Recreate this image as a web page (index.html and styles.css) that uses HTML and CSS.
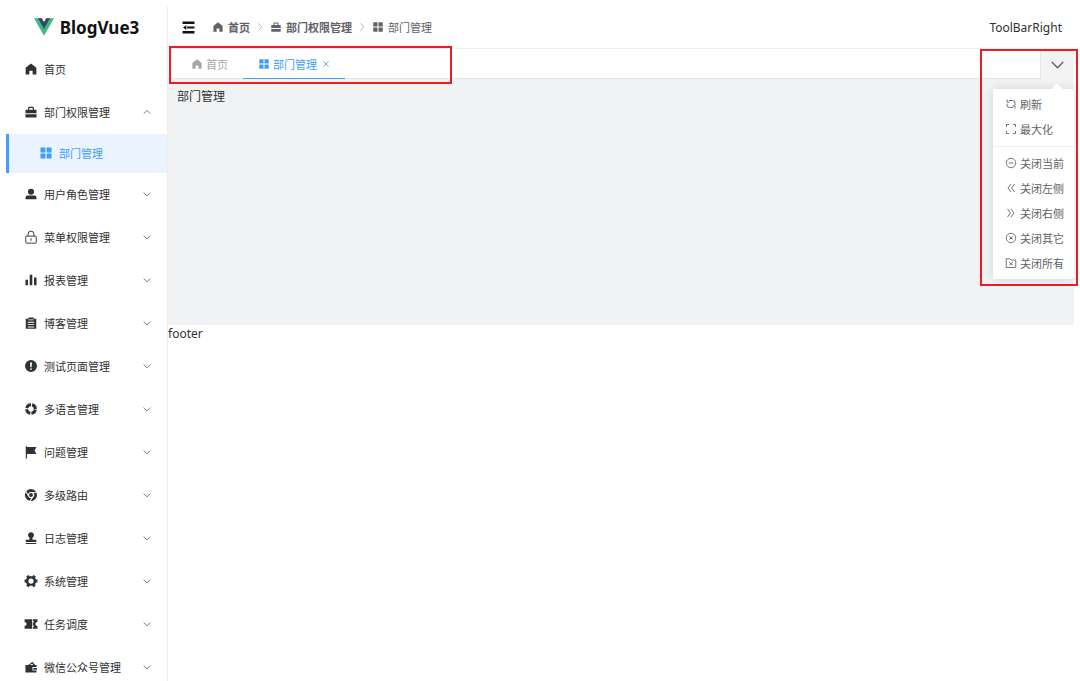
FILE: index.html
```
<!DOCTYPE html>
<html lang="zh-CN">
<head>
    <meta charset="UTF-8">
    <meta name="viewport" content="width=device-width, initial-scale=1.0">
    <title>BlogVue3</title>
    <link rel="stylesheet" href="styles.css">
</head>
<body>

    <!-- Icon set -->
    <svg class="sprite" aria-hidden="true">
        <symbol id="i-home" viewBox="0 0 24 24"><path d="M12 2.500 2.800 10V21.500h6.400V15h5.600v6.500h6.400V10z" fill="currentColor"/></symbol>
        <symbol id="i-suitcase" viewBox="0 0 24 24"><path d="M2.500 14V9q0-1 1-1H7V4.500q0-1.500 1.500-1.500h7q1.500 0 1.500 1.500V8h3.500q1 0 1 1v5zM9 8h6V5H9zM2.500 16h19v4.500q0 1-1 1h-17q-1 0-1-1z" fill="currentColor" fill-rule="evenodd"/></symbol>
        <symbol id="i-menu" viewBox="0 0 24 24"><g fill="currentColor"><rect x="2.500" y="2.500" width="8.500" height="8.500" rx=".7"/><rect x="13" y="2.500" width="8.500" height="8.500" rx=".7"/><rect x="2.500" y="13" width="8.500" height="8.500" rx=".7"/><rect x="13" y="13" width="8.500" height="8.500" rx=".7"/></g></symbol>
        <symbol id="i-user" viewBox="0 0 24 24"><path d="M6.800 8a5.200 5.200 0 1 0 10.400 0A5.200 5.200 0 1 0 6.800 8zM2.500 21v-2.500q0-4 4-4h11q4 0 4 4V21z" fill="currentColor"/></symbol>
        <symbol id="i-lock" viewBox="0 0 24 24"><g fill="none" stroke="currentColor" stroke-width="1.600"><rect x="3" y="10.500" width="18" height="12" rx="1"/><path d="M7 10.500V7a5 5 0 0 1 10 0v3.500M12 14v4.500"/></g></symbol>
        <symbol id="i-chart" viewBox="0 0 24 24"><path d="M9.800 3h4.400v18H9.800zM2.500 11.500h4.300V21H2.500zM17.200 7.500h4.300V21h-4.300z" fill="currentColor"/></symbol>
        <symbol id="i-list" viewBox="0 0 24 24"><path d="M3 4.500h4.500V2.500h9v2H21V22H3zM6.500 10v1.500h11V10zm0 4v1.500h11V14zm0 4v1.500h11V18zM7.500 6v1.300h9V6z" fill="currentColor" fill-rule="evenodd"/></symbol>
        <symbol id="i-warning" viewBox="0 0 24 24"><path d="M12 1.800a10.200 10.200 0 1 1 0 20.400 10.200 10.200 0 0 1 0-20.400zM10.300 6l.6 8h2.200l.6-8zM12 15.700a1.500 1.500 0 1 0 0 3 1.500 1.500 0 0 0 0-3z" fill="currentColor" fill-rule="evenodd"/></symbol>
        <symbol id="i-help" viewBox="0 0 24 24"><circle cx="12" cy="12" r="7.400" fill="none" stroke="currentColor" stroke-width="5.200" stroke-dasharray="9.620 2" stroke-dashoffset="-1"/></symbol>
        <symbol id="i-flag" viewBox="0 0 24 24"><path d="M3 2h2v1.500h16.500L18 9.500l3.500 6H5V23H3z" fill="currentColor"/></symbol>
        <symbol id="i-chrome" viewBox="0 0 24 24"><path d="M12 1.800A10.200 10.200 0 0 1 20.700 6.700H12A5.500 5.500 0 0 0 6.800 10.200L3.800 5.800A10.200 10.200 0 0 1 12 1.800zM2.900 7.300l4.400 7.200A5.500 5.500 0 0 0 12.300 17.500l-2.600 4.500A10.200 10.200 0 0 1 2.900 7.300zM21.500 8.300a10.200 10.200 0 0 1-10.100 13.900l4.500-6.300a5.500 5.500 0 0 0 .3-7.600zM12 8.700a3.300 3.300 0 1 0 0 6.600 3.300 3.300 0 0 0 0-6.600z" fill="currentColor"/></symbol>
        <symbol id="i-stamp" viewBox="0 0 24 24"><path d="M14.500 11.500V15H21v4H3v-4h6.500v-3.500a5 5 0 1 1 5 0zM3 20.500h18v1.700H3z" fill="currentColor"/></symbol>
        <symbol id="i-tools" viewBox="0 0 24 24"><path d="m8 1.500 1.500 2.500h5L16 1.500l4 2.500-1 2.500 1.500 3H23v5h-2.500l-1.500 3 1 2.500-4 2.500-1.500-2.500h-5L8 22.500 4 20l1-2.500-1.500-3H1v-5h2.500l1.500-3L4 4zM12 7.500a4.500 4.500 0 1 0 0 9 4.500 4.500 0 0 0 0-9z" fill="currentColor" fill-rule="evenodd"/></symbol>
        <symbol id="i-ticket" viewBox="0 0 24 24"><path d="M1 4h13v16H1v-4.500a3.500 3.500 0 0 0 0-7zM15.300 4H23v4.500a3.500 3.500 0 0 0 0 7V20h-7.700v-3h1.500v-2.500h-1.500v-5h1.500V7h-1.500z" fill="currentColor"/></symbol>
        <symbol id="i-wallet" viewBox="0 0 24 24"><path d="M2.500 8.500h5L14.500 3l4.500 5.500h2.500V12h-7v6h7v3.500h-19zM10 8.500h6L14 5.800zM16 13.500h6v3h-6z" fill="currentColor" fill-rule="evenodd"/></symbol>
        <symbol id="i-fold" viewBox="0 0 24 24"><path d="M1 1h22v4.500H1zM9.500 10h13.500v4H9.500zM1 18.500h22V23H1zM2 12l6-4.500v9z" fill="currentColor"/></symbol>
        <symbol id="i-down" viewBox="0 0 24 24"><path d="m4 8.500 8 8 8-8" fill="none" stroke="currentColor" stroke-width="2"/></symbol>
        <symbol id="i-up" viewBox="0 0 24 24"><path d="m4 16 8-8 8 8" fill="none" stroke="currentColor" stroke-width="2"/></symbol>
        <symbol id="i-right" viewBox="0 0 24 24"><path d="m8 3 8 9-8 9" fill="none" stroke="currentColor" stroke-width="2"/></symbol>
        <symbol id="i-close" viewBox="0 0 24 24"><path d="m4 4 16 16M20 4 4 20" fill="none" stroke="currentColor" stroke-width="2.500"/></symbol>
        <symbol id="i-refresh" viewBox="0 0 24 24"><path d="M8 5h7q5 0 5 5v5M4 3v5h5M16 19H9q-5 0-5-5v-3M20 21v-5h-5" fill="none" stroke="currentColor" stroke-width="1.800"/></symbol>
        <symbol id="i-full" viewBox="0 0 24 24"><path d="M3 8V3h5M16 3h5v5M21 16v5h-5M8 21H3v-5" fill="none" stroke="currentColor" stroke-width="1.800"/></symbol>
        <symbol id="i-remove" viewBox="0 0 24 24"><g fill="none" stroke="currentColor" stroke-width="1.700"><circle cx="12" cy="12" r="9.500"/><path d="M7 12h10"/></g></symbol>
        <symbol id="i-dleft" viewBox="0 0 24 24"><path d="m12 4-6 8 6 8M19 4l-6 8 6 8" fill="none" stroke="currentColor" stroke-width="1.800"/></symbol>
        <symbol id="i-dright" viewBox="0 0 24 24"><path d="m5 4 6 8-6 8M12 4l6 8-6 8" fill="none" stroke="currentColor" stroke-width="1.800"/></symbol>
        <symbol id="i-cclose" viewBox="0 0 24 24"><g fill="none" stroke="currentColor" stroke-width="1.700"><circle cx="12" cy="12" r="9.500"/><path d="m9 9 6 6M15 9l-6 6" stroke-width="2"/></g></symbol>
        <symbol id="i-folder" viewBox="0 0 24 24"><g fill="none" stroke="currentColor" stroke-width="1.700"><path d="M2.500 3.500h7L12 6h9.500v15h-19z"/><path d="m9 10.500 6 6M15 10.500l-6 6" stroke-width="2"/></g></symbol>
    </svg>

    <div class="layout">

        <!-- Sidebar -->
        <aside class="aside">
            <div class="logo">
                <svg class="logo-icon" viewBox="0 0 261 226" aria-hidden="true">
                    <path d="M161 0l-30.500 52.500L100 0H0l130.500 226L261 0z" fill="#41b883"/>
                    <path d="M161 0l-30.500 52.500L100 0H52l78.500 136L209 0z" fill="#34495e"/>
                </svg>
                <span>BlogVue3</span>
            </div>
            <nav class="menu">
                <a class="menu-item" href="#"><svg class="icon"><use href="#i-home"/></svg><span>首页</span></a>
                <button class="menu-item" type="button" aria-expanded="true"><svg class="icon"><use href="#i-suitcase"/></svg><span>部门权限管理</span><svg class="caret"><use href="#i-up"/></svg></button>
                <a class="menu-item sub active" href="#"><svg class="icon"><use href="#i-menu"/></svg><span>部门管理</span></a>
                <button class="menu-item" type="button"><svg class="icon"><use href="#i-user"/></svg><span>用户角色管理</span><svg class="caret"><use href="#i-down"/></svg></button>
                <button class="menu-item" type="button"><svg class="icon"><use href="#i-lock"/></svg><span>菜单权限管理</span><svg class="caret"><use href="#i-down"/></svg></button>
                <button class="menu-item" type="button"><svg class="icon"><use href="#i-chart"/></svg><span>报表管理</span><svg class="caret"><use href="#i-down"/></svg></button>
                <button class="menu-item" type="button"><svg class="icon"><use href="#i-list"/></svg><span>博客管理</span><svg class="caret"><use href="#i-down"/></svg></button>
                <button class="menu-item" type="button"><svg class="icon"><use href="#i-warning"/></svg><span>测试页面管理</span><svg class="caret"><use href="#i-down"/></svg></button>
                <button class="menu-item" type="button"><svg class="icon"><use href="#i-help"/></svg><span>多语言管理</span><svg class="caret"><use href="#i-down"/></svg></button>
                <button class="menu-item" type="button"><svg class="icon"><use href="#i-flag"/></svg><span>问题管理</span><svg class="caret"><use href="#i-down"/></svg></button>
                <button class="menu-item" type="button"><svg class="icon"><use href="#i-chrome"/></svg><span>多级路由</span><svg class="caret"><use href="#i-down"/></svg></button>
                <button class="menu-item" type="button"><svg class="icon"><use href="#i-stamp"/></svg><span>日志管理</span><svg class="caret"><use href="#i-down"/></svg></button>
                <button class="menu-item" type="button"><svg class="icon"><use href="#i-tools"/></svg><span>系统管理</span><svg class="caret"><use href="#i-down"/></svg></button>
                <button class="menu-item" type="button"><svg class="icon"><use href="#i-ticket"/></svg><span>任务调度</span><svg class="caret"><use href="#i-down"/></svg></button>
                <button class="menu-item" type="button"><svg class="icon"><use href="#i-wallet"/></svg><span>微信公众号管理</span><svg class="caret"><use href="#i-down"/></svg></button>
            </nav>
        </aside>

        <div class="container">
            <header class="header">
                <button class="fold" type="button" aria-label="折叠菜单"><svg><use href="#i-fold"/></svg></button>
                <nav class="breadcrumb">
                    <a class="crumb" href="#"><svg><use href="#i-home"/></svg>首页</a>
                    <svg class="separator"><use href="#i-right"/></svg>
                    <a class="crumb" href="#"><svg><use href="#i-suitcase"/></svg>部门权限管理</a>
                    <svg class="separator"><use href="#i-right"/></svg>
                    <span class="crumb last"><svg><use href="#i-menu"/></svg>部门管理</span>
                </nav>
                <div class="toolbar-right">ToolBarRight</div>
            </header>

            <!-- Tabs -->
            <div class="tabs">
                <div class="tab"><a href="#"><svg><use href="#i-home"/></svg>首页</a></div>
                <div class="tab active">
                    <a href="#"><svg><use href="#i-menu"/></svg>部门管理</a>
                    <button class="tab-close" type="button" aria-label="关闭"><svg><use href="#i-close"/></svg></button>
                </div>
                <div class="more">
                    <button class="more-button" type="button" aria-label="更多"><svg><use href="#i-down"/></svg></button>
                    <div class="dropdown">
                        <button type="button"><svg><use href="#i-refresh"/></svg>刷新</button>
                        <button type="button"><svg><use href="#i-full"/></svg>最大化</button>
                        <hr>
                        <button type="button"><svg><use href="#i-remove"/></svg>关闭当前</button>
                        <button type="button"><svg><use href="#i-dleft"/></svg>关闭左侧</button>
                        <button type="button"><svg><use href="#i-dright"/></svg>关闭右侧</button>
                        <button type="button"><svg><use href="#i-cclose"/></svg>关闭其它</button>
                        <button type="button"><svg><use href="#i-folder"/></svg>关闭所有</button>
                    </div>
                    <div class="mark mark-dropdown"></div>
                </div>
                <div class="mark mark-tabs"></div>
            </div>

            <main class="main">部门管理</main>
            <footer class="footer">footer</footer>
        </div>
    </div>

</body>
</html>
```
FILE: styles.css
```
* {
    box-sizing: border-box;
}

body {
    margin: 0;
    padding-top: 6px;
    font-family: "Noto Sans", "Noto Sans CJK SC", sans-serif;
    font-size: 11px;
    color: #303133;
    background: #fff;
}

a {
    color: inherit;
    text-decoration: none;
}

button {
    padding: 0;
    border: none;
    background: none;
    font: inherit;
    color: inherit;
    cursor: pointer;
}

svg {
    display: block;
    flex: none;
    width: 12px;
    height: 12px;
}

.sprite {
    display: none;
}

.layout {
    display: flex;
    height: calc(100vh - 6px);
    padding: 0 6px;
    overflow: hidden;
}

/* Sidebar */
.aside {
    flex: none;
    width: 162px;
    border-right: 1px solid #ebedf0;
    overflow: hidden;
}

.logo {
    display: flex;
    align-items: center;
    justify-content: center;
    gap: 6px;
    height: 42px;
    font-size: 17px;
    font-weight: bold;
    color: #111;
}

.logo-icon {
    width: 20px;
    height: 18px;
}

.menu-item {
    display: flex;
    align-items: center;
    gap: 6px;
    width: 100%;
    height: 43px;
    padding: 0 15px 2px 18px;
    text-align: left;
}

.menu-item .icon {
    width: 14px;
    height: 14px;
}

.menu-item .caret {
    width: 10px;
    height: 10px;
    margin-left: auto;
    color: #606266;
}

.menu-item.sub {
    height: 39px;
    padding-left: 30px;
    border-left: 3px solid #409eff;
}

.menu-item.active {
    color: #409eff;
    background: #ebf3ff;
}

/* Header */
.container {
    flex: 1;
    min-width: 0;
}

.header {
    display: flex;
    align-items: center;
    height: 42px;
    padding: 0 12px 0 14px;
}

.fold {
    color: #111;
}

.fold svg {
    width: 13px;
    height: 13px;
}

.breadcrumb {
    display: flex;
    align-items: center;
    gap: 5px;
    margin-left: 17px;
    color: #606266;
}

.crumb {
    display: flex;
    align-items: center;
    gap: 4px;
    font-weight: bold;
}

.crumb.last {
    font-weight: normal;
}

.separator {
    width: 10px;
    height: 10px;
    color: #a8abb2;
}

.toolbar-right {
    margin-left: auto;
    font-size: 12px;
}

/* Tabs */
.tabs {
    position: relative;
    display: flex;
    height: 31px;
    padding-left: 8px;
    border-top: 1px solid #f0f1f3;
    border-bottom: 1px solid #e4e7ed;
}

.tab {
    display: flex;
    align-items: center;
    gap: 5px;
    padding: 0 15px;
    color: #a3a5a8;
}

.tab a {
    display: flex;
    align-items: center;
    gap: 3px;
}

.tab.active {
    color: #409eff;
    box-shadow: 0 1px #409eff;
}

.tab-close svg {
    width: 8px;
    height: 8px;
}

.more {
    position: relative;
    margin-left: auto;
}

.more-button {
    display: flex;
    align-items: center;
    justify-content: center;
    width: 34px;
    height: 30px;
    border-left: 1px solid #e4e7ed;
    color: #606266;
    background: #f3f3f4;
}

.more-button svg {
    width: 17px;
    height: 17px;
}

.dropdown {
    position: absolute;
    top: 40px;
    right: 0;
    z-index: 1;
    width: 81px;
    padding: 3px 0;
    border-radius: 3px;
    color: #606266;
    background: #fff;
    box-shadow: 0 0 10px rgba(0, 0, 0, 0.12);
}

/* Arrow that points at the button */
.dropdown::before {
    content: "";
    position: absolute;
    top: -4px;
    right: 13px;
    width: 8px;
    height: 8px;
    background: #fff;
    transform: rotate(45deg);
}

.dropdown button {
    display: flex;
    align-items: center;
    gap: 3px;
    width: 100%;
    height: 25px;
    padding: 0 0 2px 12px;
    white-space: nowrap;
}

.dropdown hr {
    margin: 4px 0;
    border: none;
    border-top: 1px solid #ebeef5;
}

/* Red highlight frames */
.mark {
    position: absolute;
    z-index: 2;
    border: 2px solid #ed1c24;
    pointer-events: none;
}

.mark-tabs {
    top: -3px;
    left: 1px;
    width: 283px;
    height: 38px;
}

.mark-dropdown {
    top: 0;
    right: -4px;
    width: 98px;
    height: 237px;
}

/* Content */
.main {
    min-height: 246px;
    padding: 8px 9px;
    font-size: 12px;
    background: #f0f2f4;
}

.footer {
    font-size: 12px;
}
```
